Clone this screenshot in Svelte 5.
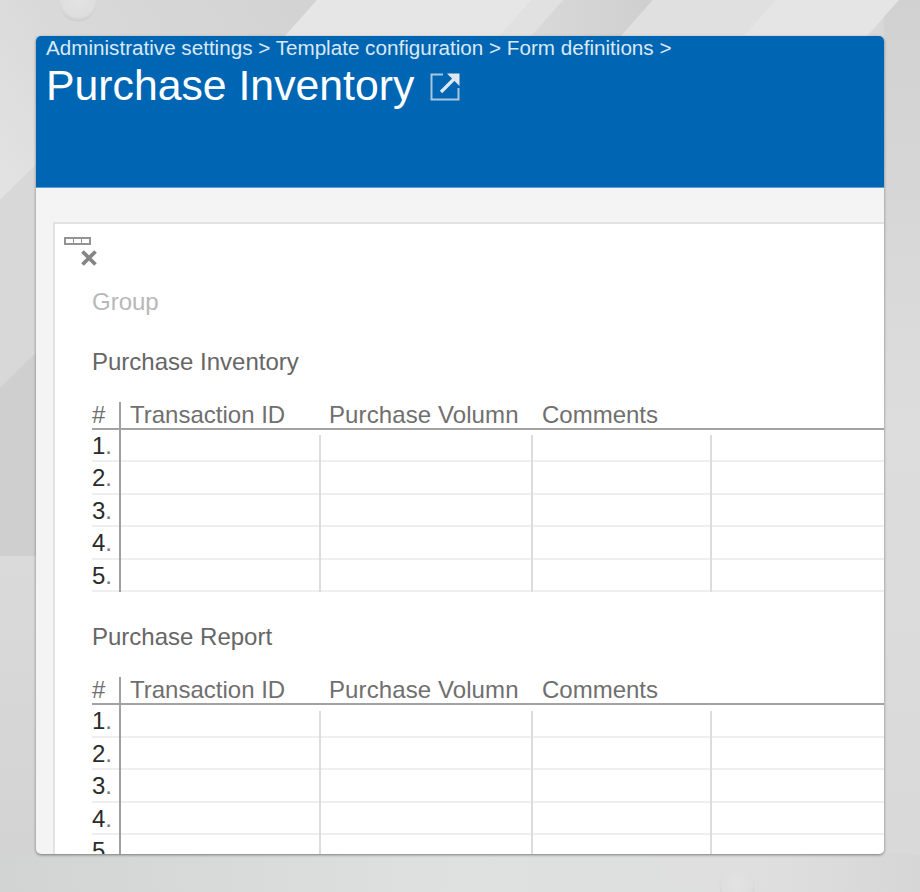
<script>
  const sections = [
    { title: 'Purchase Inventory', rows: [1, 2, 3, 4, 5] },
    { title: 'Purchase Report', rows: [1, 2, 3, 4, 5] }
  ];
</script>

<div class="page">
  <svg class="backdrop" width="920" height="892" viewBox="0 0 920 892" aria-hidden="true">
    <defs>
      <linearGradient id="floor" x1="0" y1="0" x2="1" y2="0">
        <stop offset="0" stop-color="#d2d3d3" />
        <stop offset="0.5" stop-color="#dfe0e0" />
        <stop offset="0.85" stop-color="#dedede" />
        <stop offset="1" stop-color="#d6d6d6" />
      </linearGradient>
      <linearGradient id="corner" gradientUnits="userSpaceOnUse" x1="0" y1="200" x2="300" y2="0">
        <stop offset="0" stop-color="#e3e3e3" />
        <stop offset="0.4" stop-color="#d9d9d9" />
        <stop offset="1" stop-color="#d3d3d3" />
      </linearGradient>
      <linearGradient id="stripe" gradientUnits="userSpaceOnUse" x1="531" y1="0" x2="653" y2="0">
        <stop offset="0" stop-color="#d9d9d9" />
        <stop offset="1" stop-color="#cfcfcf" />
      </linearGradient>
      <linearGradient id="right" x1="0" y1="0" x2="0" y2="1">
        <stop offset="0" stop-color="#d1d1d1" />
        <stop offset="0.5" stop-color="#dddddd" />
        <stop offset="1" stop-color="#d9d9d9" />
      </linearGradient>
      <linearGradient id="side" x1="0" y1="0" x2="0" y2="1">
        <stop offset="0" stop-color="#dadada" />
        <stop offset="1" stop-color="#d3d3d3" />
      </linearGradient>
      <radialGradient id="bead" cx="0.5" cy="0.42" r="0.58">
        <stop offset="0" stop-color="#e3e3e3" />
        <stop offset="0.78" stop-color="#dedede" />
        <stop offset="1" stop-color="#cbcbcb" />
      </radialGradient>
    </defs>
    <rect width="920" height="892" fill="url(#floor)" />
    <polygon points="0,0 317,0 285,36 36,36 36,165 0,200" fill="url(#corner)" />
    <polygon points="0,200 36,165 36,353 0,388" fill="#d8d8d8" />
    <polygon points="0,388 36,353 36,556 0,556" fill="#cfcfcf" />
    <polygon points="0,556 36,556 36,854 0,854" fill="url(#side)" />
    <polygon points="317,0 563,0 531,36 285,36" fill="#e6e6e6" />
    <polygon points="531,0 563,0 531,36 499,36" fill="#e1e1e1" />
    <polygon points="563,0 653,0 621,36 531,36" fill="url(#stripe)" />
    <polygon points="653,0 776,0 744,36 621,36" fill="#e0e0e0" />
    <polygon points="776,0 899,0 867,36 744,36" fill="#e5e5e5" />
    <polygon points="899,0 920,0 920,854 884,854 884,17" fill="url(#right)" />
    <circle cx="78" cy="3" r="18.5" fill="url(#bead)" />
    <circle cx="737" cy="887" r="17.5" fill="url(#bead)" />
  </svg>

  <main class="card">
    <header class="banner">
      <div class="crumbs">Administrative settings &gt; Template configuration &gt; Form definitions &gt;</div>
      <h1>
        Purchase Inventory
        <svg class="popout" width="30" height="28" viewBox="0 0 30 28" aria-hidden="true">
          <path d="M13 1.5H1.5V26.5H28.5V15" fill="none" stroke="#a9c6df" stroke-width="2" />
          <path d="M11 19L24 6" fill="none" stroke="#dfe7ee" stroke-width="3.2" />
          <path d="M17 0.5H29.5V13L25.5 9L21 4.5Z" fill="#dfe7ee" />
        </svg>
      </h1>
    </header>

    <div class="body">
      <section class="panel">
        <div class="handle"><span></span><span></span><span></span></div>
        <svg class="close" width="18" height="18" viewBox="0 0 18 18" aria-hidden="true">
          <path d="M2.5 2.5L15.5 15.5M15.5 2.5L2.5 15.5" stroke="#858585" stroke-width="3.8" />
        </svg>

        <div class="group">Group</div>

        {#each sections as section, s}
          <h2 class:later={s > 0}>{section.title}</h2>
          <div class="grid" class:second={s > 0}>
            <div class="head">
              <div class="num">#</div>
              <div class="col c1">Transaction ID</div>
              <div class="col c2">Purchase Volumn</div>
              <div class="col c3">Comments</div>
              <div class="col c4"></div>
            </div>
            {#each section.rows as row}
              <div class="row">
                <div class="num">{row}<span class="dot">.</span></div>
                <div class="cell c1"></div>
                <div class="cell c2"></div>
                <div class="cell c3"></div>
                <div class="cell c4"></div>
              </div>
            {/each}
          </div>
        {/each}
      </section>
    </div>
  </main>
</div>

<style>
  :global(body) {
    margin: 0;
    background: #dcdcdc;
  }
  .page {
    position: relative;
    width: 920px;
    height: 892px;
    overflow: hidden;
    padding: 36px;
    box-sizing: border-box;
    font-family: "Liberation Sans", Arial, sans-serif;
  }
  .backdrop {
    position: absolute;
    inset: 0;
  }
  .card {
    position: relative;
    width: 848px;
    height: 818px;
    border-radius: 5px;
    overflow: hidden;
    background: #f4f4f4;
    box-shadow: 0 1px 3px rgba(0, 0, 0, 0.45);
  }
  .banner {
    height: 152px;
    box-sizing: border-box;
    background: #0066b3;
    border-bottom: 1px solid #5b9fd6;
    padding: 0 0 0 10px;
    color: #fff;
  }
  .crumbs {
    font-size: 20.65px;
    line-height: 24px;
    color: #dbe9f5;
  }
  h1 {
    margin: 1px 0 0 0;
    font-size: 42.75px;
    line-height: 48px;
    font-weight: 400;
    display: flex;
    align-items: center;
    gap: 16px;
  }
  .popout {
    flex: none;
    margin-top: 3px;
  }
  .body {
    padding: 34px 0 0 17px;
  }
  .panel {
    position: relative;
    background: #fff;
    border: 2px solid #e2e2e2;
    border-right: 0;
    border-bottom: 0;
    padding: 13px 0 0 37px;
    height: 700px;
    box-sizing: border-box;
  }
  .handle {
    position: absolute;
    left: 9px;
    top: 13px;
    display: flex;
    gap: 1px;
    padding: 2px;
    background: #949494;
  }
  .handle span {
    width: 7px;
    height: 4px;
    background: #fff;
  }
  .close {
    position: absolute;
    left: 25px;
    top: 25px;
  }
  .group {
    margin-top: 51px;
    font-size: 24px;
    line-height: 28px;
    color: #b8b8b8;
  }
  h2 {
    margin: 32px 0 0;
    font-size: 24px;
    line-height: 28px;
    font-weight: 400;
    color: #666;
  }
  h2.later {
    margin-top: 31px;
  }
  .grid {
    margin-top: 26px;
    font-size: 24px;
  }
  .head,
  .row {
    display: grid;
    grid-template-columns: 27px 200px 212px 179px 1fr;
  }
  .head {
    height: 26px;
    border-bottom: 2px solid #a3a3a3;
    color: #6f6f6f;
    line-height: 26px;
  }
  .head .col {
    padding-left: 11px;
    box-sizing: border-box;
    white-space: nowrap;
  }
  .head .c1 {
    border-left: 2px solid #a0a0a0;
    height: 26px;
    padding-left: 9px;
  }
  .head .c2 {
    padding-left: 10px;
    letter-spacing: 0.1px;
  }
  .row {
    height: 32.5px;
    box-sizing: border-box;
    border-bottom: 2px solid #efefef;
    color: #2b2b2b;
    line-height: 31px;
  }
  .row .num {
    white-space: nowrap;
  }
  .dot {
    color: #777;
  }
  .cell {
    height: 32.5px;
  }
  .row .c1 {
    border-left: 2px solid #a0a0a0;
  }
  .row .c2,
  .row .c3,
  .row .c4 {
    border-left: 2px solid #dcdcdc;
  }
  .row:nth-child(2) {
    height: 32px;
  }
  .second .row:nth-child(2) {
    height: 32.75px;
  }
  .row:nth-child(2) .c2,
  .row:nth-child(2) .c3,
  .row:nth-child(2) .c4 {
    margin-top: 5px;
    height: 27.5px;
  }
  .second .row:nth-child(2) .c2,
  .second .row:nth-child(2) .c3,
  .second .row:nth-child(2) .c4 {
    margin-top: 6px;
  }
</style>
